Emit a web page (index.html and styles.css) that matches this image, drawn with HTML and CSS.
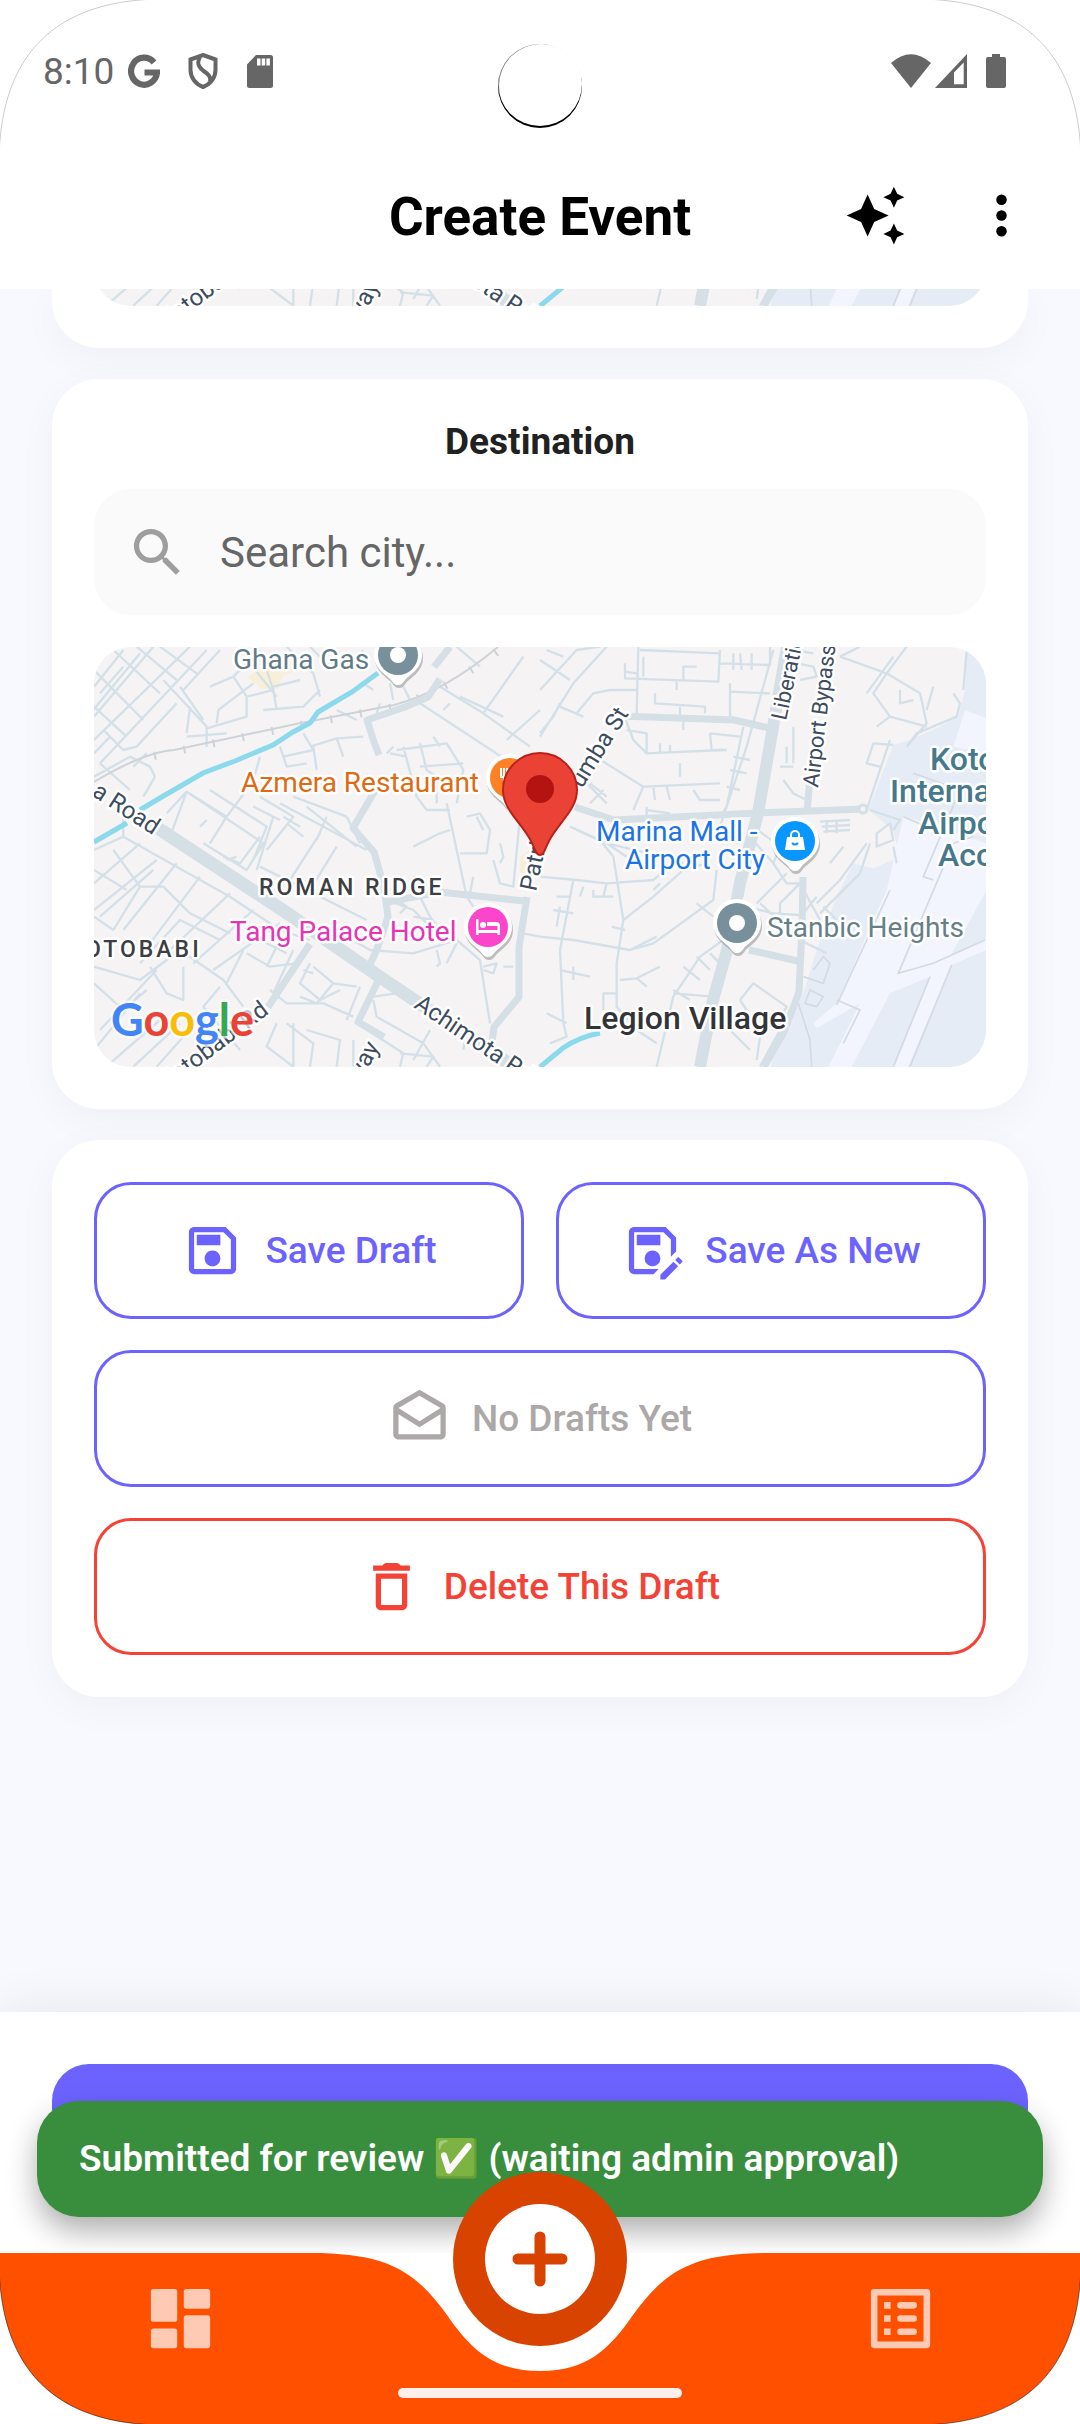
FILE: index.html
```html
<!DOCTYPE html>
<html lang="en">
<head>
<meta charset="utf-8">
<meta name="viewport" content="width=device-width, initial-scale=1">
<title>Create Event</title>
<link rel="stylesheet" href="styles.css">
</head>
<body>
<div class="screen">
  <header class="top">
    <div class="status">
      <span class="status-time">8:10</span>
      <svg class="status-g" viewBox="0 0 32 34" aria-hidden="true"><path d="M26 8.500A13 13.500 0 1 0 29 18.500H16.500" fill="none" stroke="#666" stroke-width="6.200"/></svg>
      <svg class="status-shield" viewBox="0 0 30 36" aria-hidden="true"><path d="M15 2 27.500 6.500V17C27.500 25 22 31.500 15 34 8 31.500 2.500 25 2.500 17V6.500ZM12 4C9 9 9.500 13 15 17.500 21 21.500 23 24 22 28.500" fill="none" stroke="#666" stroke-width="4"/></svg>
      <svg class="status-sd" viewBox="0 0 26 33" aria-hidden="true"><path fill="#666" fill-rule="evenodd" d="M9 0H23.500Q26 0 26 2.500V30.500Q26 33 23.500 33H2.500Q0 33 0 30.500V9.500ZM10 3.500V10.500H13.500V3.500ZM14.700 3.500V10.500H18.200V3.500ZM19.400 3.500V10.500H22.900V3.500Z"/></svg>
      <span class="spacer"></span>
      <svg class="status-wifi" viewBox="0 0 40 34" aria-hidden="true"><path fill="#666" d="M0 9Q20-8.500 40 9L20 34Z"/></svg>
      <svg class="status-cell" viewBox="0 0 32 34" aria-hidden="true"><path fill="#666" fill-rule="evenodd" d="M32 0V34H0ZM28.700 8.500 19 18.500V30.300H28.700Z"/></svg>
      <svg class="status-battery" viewBox="0 0 20 34" aria-hidden="true"><path fill="#666" d="M6 0H14V3H18Q20 3 20 5V32Q20 34 18 34H2Q0 34 0 32V5Q0 3 2 3H6Z"/></svg>
    </div>
    <div class="appbar">
      <h1 class="appbar-title">Create Event</h1>
      <div class="appbar-actions">
        <button class="icon-button" type="button" aria-label="Suggestions"><svg class="icon" viewBox="0 0 24 24"><path d="M19 9l1.250-2.750L23 5l-2.750-1.250L19 1l-1.250 2.750L15 5l2.750 1.250L19 9zm-7.500.5L9 4 6.500 9.500 1 12l5.500 2.500L9 20l2.500-5.500L17 12l-5.500-2.500zM19 15l-1.250 2.750L15 19l2.750 1.250L19 23l1.250-2.750L23 19l-2.750-1.250L19 15z"/></svg></button>
        <button class="icon-button" type="button" aria-label="More options"><svg class="icon" viewBox="0 0 24 24"><circle cx="12" cy="6" r="2"/><circle cx="12" cy="12" r="2"/><circle cx="12" cy="18" r="2"/></svg></button>
      </div>
    </div>
  </header>

  <main class="content">
    <section class="card card-cut" aria-label="Origin">
      <div class="map-window">
        <svg class="map" viewBox="0 0 892 420" preserveAspectRatio="xMidYMid slice" aria-hidden="true">
          <use href="#streets"/>
          <g class="road-name">
            <text transform="translate(72 444) rotate(-37)">Kotobabi</text>
            <text transform="translate(266 437) rotate(-62)">way</text>
            <text transform="translate(319 360) rotate(34)">Achimota Rd</text>
          </g>
        </svg>
      </div>
    </section>

    <section class="card">
      <h2 class="card-title">Destination</h2>
      <label class="search">
        <svg class="icon" viewBox="0 0 24 24" aria-hidden="true"><path d="M15.500 14h-.79l-.28-.27A6.471 6.471 0 0 0 16 9.500 6.500 6.500 0 1 0 9.500 16c1.610 0 3.090-.59 4.230-1.570l.27.280v.79l5 4.990L20.490 19l-4.990-5zm-6 0C7.010 14 5 11.990 5 9.500S7.010 5 9.500 5 14 7.010 14 9.500 11.990 14 9.500 14z"/></svg>
        <input class="search-input" type="text" placeholder="Search city..." aria-label="Search city">
      </label>
      <svg class="map" viewBox="0 0 892 420" preserveAspectRatio="xMidYMid slice" role="img" aria-label="Map of the destination">
        <defs>
          <g id="pin">
            <path d="M0 30C-3 30-5 28-7 25-11 20-24 14-24 0A24 24 0 0 1 24 0C24 14 11 20 7 25 5 28 3 30 0 30Z" fill="#888" opacity=".5" transform="translate(1 3)"/>
            <path d="M0 30C-3 30-5 28-7 25-11 20-24 14-24 0A24 24 0 0 1 24 0C24 14 11 20 7 25 5 28 3 30 0 30Z" fill="#fff"/>
          </g>
        </defs>
        <g id="streets">
          <rect width="892" height="420" fill="#f5f3f4"/>
          <path fill="#f8efd9" d="M154 30 166 22 184 20 190 8 204 8 200 24 188 30 184 42 168 42ZM426 210 434 204 448 212 446 226 426 226Z"/>
          <g transform="translate(446 -17) scale(.33333)">
            <path fill="#e5ecf6" d="M1280 50 1340 50V1320H690L720 1200 790 1090 830 960 890 800 940 700 1000 715 1080 680 1060 600 985 540 1060 345 1110 330 1190 295 1255 260 1275 180Z"/>
            <path fill="#f2f4fe" d="M1275 240 1340 265V370L1240 350ZM1090 560 1150 575 1340 640V780L1230 980 1340 925V960L1235 1005 1100 1320H1060L1170 1040 1050 1090 930 1320H860L960 1120 830 1195 820 1180 900 1110 960 960 1040 780Z"/>
            <path fill="none" stroke="#d3dae3" stroke-width="5" d="M1120 430 1260 480 1150 740 1180 750M1090 560 1160 590M890 1110 960 1140 910 1240M1050 780 890 1125M1335 930 1180 1000 1075 1030 1240 640 1300 620M1170 1040 1060 1310M1235 1005 1110 1310M790 1040 850 1060 870 1000 850 980 820 1020M795 1120 830 1130 850 1100 810 1080ZM775 1120 810 1230 815 1310"/>
          </g>
          <g fill="none" stroke="#d4e0e8" stroke-width="7" stroke-linejoin="round">
            <g transform="translate(-14 -17) scale(.33333)">
              <path d="M42 170 130 60M42 260 220 50M42 330 330 50M60 400 380 60M100 60 240 190M42 120 190 270M170 50 290 150M240 50 350 130M42 230 140 320M130 110 60 190M70 300 130 360 170 350 290 220M180 70 40 240M330 230 320 310M42 370 90 320M250 150 380 290 380 350M420 60 310 180M300 170 370 270M390 170 460 140 540 60M460 140 500 200 500 260 380 295M410 280 415 240 520 160M500 200 580 180 560 120M550 240 670 230 720 180M580 180 590 240M620 50 700 130 720 200M580 170 660 150M510 100 590 200M690 50 760 120"/>
              <path d="M42 440 150 380 210 410 225 440 190 500M60 400 150 480M160 410 200 370M320 320 440 310M540 380 520 450M600 350 620 410 680 400M670 310 700 360 610 380M690 350 770 325 850 320M770 325 790 380M700 350 710 420M1020 220 1340 430M1080 170 1210 250 1350 350M1210 250 1330 80M1140 200 1270 260M1280 330 1380 240M1090 240 1110 220M1130 50 1200 110"/>
              <path d="M260 550 320 485 550 640 500 720 370 640M320 485 270 620M320 485 440 560 390 640M440 560 500 480M390 480 560 590 520 690M430 680 480 700 540 620M540 500 640 560 560 660M520 530 600 570M600 520 860 660M640 500 800 560M720 610 630 750M770 650 690 780M680 530 830 650M540 710 860 870M580 560 530 720M610 560 660 590M620 580 670 620M360 590 380 570M440 690 470 680M740 560 710 630M800 560 840 640"/>
              <path d="M42 660 130 620 450 800 600 900 690 930M130 620 130 560M42 760 180 640M42 840 230 690M100 660 180 770 250 770 330 850 450 910M60 860 220 720M130 900 290 700M210 940 360 740M270 960 450 790M340 1000 520 840M400 1020 600 880M180 770 100 900M42 720 140 780M42 860 100 900M180 1000 300 870 420 930M42 1010 180 1050 300 960 430 1050 490 1130M42 1060 130 1140 200 1080M60 1200 230 1020M42 1260 180 1090M90 1300 240 1170M160 1310 300 1180M230 1310 310 1220M210 1010 260 1090 310 1110 310 1010M420 1070 370 1130 480 1260M500 970 570 1010 650 1000M540 930 620 970M490 960 440 1060M600 930 560 1010M640 960 580 1090"/>
              <path d="M690 1000 660 1060 720 1110 780 1080M700 1010 760 1060 830 1070M760 1060 710 1120 660 1100M670 1020 700 1030M570 1080 620 1120 730 1120 820 1160M640 1180 640 1310M590 1180 560 1250 640 1310M620 1180 700 1240 690 1310M680 1200 780 1230 770 1310M830 1180 970 1270 960 1310M820 1230 820 1310M880 1100 950 1090 1040 1150 1160 1190 1150 1260M880 1110 890 1160 1030 1240 1080 1310M840 1070 800 1170M960 1270 1060 1280 1040 1310M1050 1200 1000 1290"/>
              <path d="M800 920 870 960 1000 970 1130 930 1200 990 1230 1180M1070 960 1080 1000 1070 1010M1130 940 1100 1000M920 810 1000 840 1060 900M950 810 980 830 960 850M1000 760 1050 860 1080 900M1100 520 1160 800 1180 830M950 360 1100 340 1150 420 1130 520M970 350 1010 500 1040 540 1110 540M930 370 980 380M1020 340 1040 420 1070 440 1070 520M1020 410 1150 400M940 350 920 370M1060 320 1080 350M1160 560 1200 550 1230 600 1220 670 1140 670M1000 650 1080 610 1110 600M1180 740 1170 790M1190 560 1210 600M1260 700 1270 680 1260 640M1240 690 1260 760 1300 770 1320 560M1330 910 1380 920M1060 870 1000 860"/>
              <path d="M1210 1010 1250 1000 1240 1030 1210 1020M1270 1010 1300 1010M850 60 830 90M880 180 850 160M900 220 890 250M930 160 940 210M770 240 830 270M970 170 990 210"/>
            </g>
            <g transform="translate(446 -17) scale(.33333)">
              <path d="M0 180 110 60 180 50M0 320 100 160 200 50M0 90 90 150M20 60 70 80M60 230 130 260M60 220 40 260 0 310M110 250 160 190 210 180 290 180M295 50 290 250M300 60 540 70M255 100 255 145 535 155 540 60M255 125 290 130M310 80 310 140M430 150 430 110 470 110M410 150 410 180M540 100 690 105 690 50M580 70 580 120M600 70 605 120M635 70 635 120M570 185 690 190M570 160 570 260 600 270M345 190 345 220 495 230 495 250M420 230 420 260M700 60 620 350 530 620 600 640M610 290 560 530 540 560M510 310 600 320M510 310 515 360 560 360M430 300 430 270"/>
              <path d="M250 250 280 330 320 370 550 360M150 370 310 470 540 460M320 370 320 310 260 300M310 470 280 540M360 370 360 340M390 370 390 345M380 470 390 510M460 480 480 510 540 510M420 400 420 440M110 430 200 520M150 460 200 500M190 480 150 520M580 380 630 390M570 420 620 430M560 470 600 480M340 470 345 510M320 540 390 550M320 530 320 560"/>
              <path d="M0 740 110 750 200 760 340 750 400 700 430 680M90 590 180 630 220 680 250 870 230 1000 230 1130 290 1200 350 1240M110 600 200 640 370 680 430 700M200 640 260 680M340 680 340 720M100 750 60 960 70 1180 80 1220 30 1240M0 920 100 930 270 960 340 940 520 810 530 720M250 870 340 800 430 720 500 700M270 960 350 920M50 800 90 800M40 840 100 850M60 830 50 890M130 770 120 800M160 780 160 800 220 800M200 760 190 800M215 890 255 900M340 780 360 760M470 820 520 860M240 1050 290 1045 360 1010M290 1045 320 1070M400 1080 450 1110M60 1020 150 1040M100 1010 100 1050M20 1150 80 1180M190 1140 190 1090 230 1090M350 1310 400 1100 480 980 550 930M430 1010 480 1050M470 980 510 1020M400 1090 520 1100M510 970 540 1000"/>
              <path d="M630 620 700 700 740 760 780 760M640 590 720 650 700 700M650 820 740 730M620 830 700 850 780 855M720 850 720 820 780 760M660 820 780 930 860 970M780 760 840 870M600 1110 640 1060 740 1130 700 1200M600 1110 640 1170M570 1200 630 1260M610 1190 660 1220 650 1290M720 1200 660 1310M830 820 900 750 980 640M850 830 890 870M830 800 790 850"/>
              <path d="M900 80 1040 130 1140 190 1160 280 1100 350M900 80 960 50M1100 50 1040 130M980 190 1060 80M1040 130 1000 190 1050 260 1010 290M1050 260 1160 290M1080 180 1080 220 1120 210M1180 170 1160 240M1240 190 1260 220 1250 260 1130 310 1100 350M1280 60 1270 180M1060 345 1000 340 980 400 1020 410M1050 330 980 540M730 450 760 490 800 510M760 290 760 400M720 410 760 410M740 350 740 400M770 100 820 110 830 140 780 150M760 60 820 70M990 540 1080 570 1060 600M1010 610 1050 580 1060 630 1010 650ZM1060 650 1070 700M990 640 960 730 840 850"/>
              <path d="M840 575 930 570M845 590 930 585M850 605 930 600M860 570 860 610M890 570 890 610M910 650 870 700"/>
            </g>
          </g>
          <g fill="none" stroke="#ced3d8" stroke-width="2">
            <path d="M0 135Q50 105 80 103L202 77 300 58Q350 45 404 0"/>
            <path stroke-dasharray="2 28" stroke-width="8" d="M60 109 202 79 300 60Q350 45 404 4"/>
          </g>
          <path fill="none" stroke="#8bd9ec" stroke-width="5" d="M0 195 33 176M46 163 66 151 109 126 141 114 179 98 199 85 216 76 224 65 258 45 284 26M446 420 469 401Q485 390 506 386"/>
          <g fill="none" stroke="#d5dfe6" stroke-linejoin="round">
            <path stroke-width="13" d="M56 176 193 266 286 330 420 420"/>
            <path stroke-width="12" d="M693 0 679 80 664 166 646 236 633 303 619 353 606 420"/>
            <path stroke-width="7" d="M340 20 356 0M346 32 334 50 311 60 273 73 280 95 285 108M285 137 259 181 280 205 290 240 294 270 283 302 275 320M294 255 345 245 430 254M433 250 425 300 425 350 400 380 396 410M481 160 520 173 664 166 770 162M526 69 640 73 684 83M709 230 708 280 705 345 690 385 670 420M655 303 708 315M286 330 264 375 290 390M174 360 216 297M716 130 713 166"/>
          </g>
          <circle cx="769" cy="162" r="4" fill="#f5f3f4" stroke="#d5dfe6" stroke-width="3"/>
        </g>
        <g class="road-name">
          <text transform="translate(-3 148) rotate(33)">a Road</text>
          <text transform="translate(442 245) rotate(-78)">Patri</text>
          <text transform="translate(488 142) rotate(-58)">umba St</text>
          <text class="road-small" transform="translate(692 74) rotate(-78)">Liberatio</text>
          <text class="road-small" transform="translate(724 141) rotate(-83)">Airport Bypass</text>
          <text transform="translate(72 444) rotate(-37)">Kotobabi Rd</text>
          <text transform="translate(266 437) rotate(-62)">way</text>
          <text transform="translate(319 360) rotate(34)">Achimota Rd</text>
        </g>
        <g class="poi">
          <text x="139" y="22" fill="#5f7c88">Ghana Gas</text>
          <text x="147" y="145" fill="#df6a11">Azmera Restaurant</text>
          <text x="136" y="294" fill="#e733b5">Tang Palace Hotel</text>
          <text x="502" y="194" fill="#1a73e8">Marina Mall -</text>
          <text x="531" y="222" fill="#1a73e8">Airport City</text>
          <text x="673" y="290" fill="#668089">Stanbic Heights</text>
        </g>
        <g class="district">
          <text x="165" y="248">ROMAN RIDGE</text>
          <text x="-9" y="310">OTOBABI</text>
        </g>
        <g class="place">
          <text x="490" y="382">Legion Village</text>
          <g fill="#46798a">
            <text x="836" y="123">Koto</text>
            <text x="796" y="155">Interna</text>
            <text x="824" y="187">Airpo</text>
            <text x="844" y="219">Acc</text>
          </g>
        </g>
        <g transform="translate(304 8)"><use href="#pin"/><circle r="20" fill="#78909c"/><circle r="8" fill="#fff"/></g>
        <g transform="translate(416 131)"><use href="#pin"/><circle r="20" fill="#ff8126"/><path d="M-9-10V-1H-3V-10M-6-10V10" fill="none" stroke="#fff" stroke-width="2"/></g>
        <g transform="translate(394 280)"><use href="#pin"/><circle r="20" fill="#fb45cb"/><path fill="#fff" d="M-12-8H-9.500V3H9.500V-1H-1V-5H8Q12-5 12-1V8H9.500V6H-9.500V8H-12Z"/><circle cx="-5" cy="-2" r="3" fill="#fff"/></g>
        <g transform="translate(701 194)"><use href="#pin"/><circle r="20" fill="#0a96ff"/><path fill="#fff" d="M-8-4H8L10 9H-10Z"/><path d="M-4-3V-6A4 4 0 0 1 4-6V-3" fill="none" stroke="#fff" stroke-width="2"/><path d="M-3 2Q0 5 3 2" fill="none" stroke="#0a96ff" stroke-width="2"/></g>
        <g transform="translate(643 276)"><use href="#pin"/><circle r="20" fill="#78909c"/><circle r="8" fill="#fff"/></g>
        <path d="M446 106A37 37 0 0 1 483 143C483 163 464 176 455 194 450 204 450 208 446 208S442 204 437 194C428 176 409 163 409 143A37 37 0 0 1 446 106Z" fill="#ea4335" stroke="#b9211b" stroke-width="2"/>
        <circle cx="446" cy="142" r="14" fill="#b31412"/>
        <text class="brand" x="17" y="389"><tspan fill="#4285f4">G</tspan><tspan fill="#ea4335">o</tspan><tspan fill="#fbbc04">o</tspan><tspan fill="#4285f4">g</tspan><tspan fill="#34a853">l</tspan><tspan fill="#ea4335">e</tspan></text>
      </svg>
    </section>

    <section class="card drafts" aria-label="Drafts">
      <div class="draft-row">
        <button class="outline" type="button"><svg class="icon" viewBox="0 0 24 24" aria-hidden="true"><path d="M17 3H5c-1.110 0-2 .9-2 2v14c0 1.100.89 2 2 2h14c1.100 0 2-.9 2-2V7l-4-4zm2 16H5V5h11.170L19 7.830V19zm-7-7c-1.660 0-3 1.340-3 3s1.340 3 3 3 3-1.340 3-3-1.340-3-3-3zM6 6h9v4H6V6z"/></svg>Save Draft</button>
        <button class="outline" type="button"><svg class="icon" viewBox="0 0 24 24" aria-hidden="true"><path d="M21 12.400V7l-4-4H5c-1.110 0-2 .9-2 2v14c0 1.100.89 2 2 2h7.400l2-2H5V5h11.170L19 7.830v6.570l2-2z"/><circle cx="12" cy="15" r="3"/><path d="M6 6h9v4H6V6zm13.990 10.250l1.770 1.770L16.770 23H15v-1.770l4.990-4.980zm3.260.26l-.85.85-1.770-1.770.85-.85c.2-.2.51-.2.710 0l1.060 1.060c.2.2.2.51 0 .71z"/></svg>Save As New</button>
      </div>
      <button class="outline" type="button" disabled><svg class="icon" viewBox="0 0 24 24" aria-hidden="true"><path d="M21.990 8c0-.72-.37-1.350-.94-1.700L12 1 2.950 6.300C2.380 6.650 2 7.280 2 8v10c0 1.100.9 2 2 2h16c1.100 0 2-.9 2-2l-.01-10zM20 8v.01L12 13 4 8l8-4.680L20 8zM4 18v-7.660l8 5.020 7.990-4.990L20 18H4z"/></svg>No Drafts Yet</button>
      <button class="outline outline-danger" type="button"><svg class="icon" viewBox="0 0 24 24" aria-hidden="true"><path d="M6 19c0 1.100.9 2 2 2h8c1.100 0 2-.9 2-2V7H6v12zM8 9h8v10H8V9zm7.500-5-.7-.7Q14.500 3 14 3h-4Q9.500 3 9.200 3.300L8.500 4H5v2h14V4h-3.500z"/></svg>Delete This Draft</button>
    </section>
  </main>

  <div class="actions">
    <button class="submit" type="button" aria-label="Submit"></button>
    <div class="toast" role="status">Submitted for review ✅ (waiting admin approval)</div>
  </div>

  <nav class="nav">
    <svg class="nav-shape" viewBox="0 0 1080 171" preserveAspectRatio="none" aria-hidden="true"><path fill="#ff5000" d="M0 0H310C388 0 415 18 447 62 470 95 492 118 540 118S610 95 633 62C665 18 692 0 770 0H1080V171H0Z"/></svg>
    <a class="nav-item" href="#dashboard" aria-label="Dashboard"><svg class="nav-icon" viewBox="0 0 24 24"><rect x="3" y="3" width="8" height="10" rx=".8"/><rect x="3" y="15" width="8" height="6" rx=".8"/><rect x="13" y="3" width="8" height="6" rx=".8"/><rect x="13" y="11" width="8" height="10" rx=".8"/></svg></a>
    <span class="nav-gap"></span>
    <a class="nav-item" href="#events" aria-label="Events"><svg class="nav-icon" viewBox="0 0 24 24"><path fill-rule="evenodd" d="M4 3H20Q21 3 21 4V20Q21 21 20 21H4Q3 21 3 20V4Q3 3 4 3ZM5 5V19H19V5ZM7 7H9V9H7ZM7 11H9V13H7ZM7 15H9V17H7Z"/><rect x="11" y="7" width="6" height="2" rx="1"/><rect x="11" y="11" width="6" height="2" rx="1"/><rect x="11" y="15" width="6" height="2" rx="1"/></svg></a>
    <button class="fab" type="button" aria-label="Create"><svg class="fab-icon" viewBox="0 0 110 110"><circle cx="55" cy="55" r="55" fill="#fff"/><path d="M55 33V77M33 55H77" stroke="#d94300" stroke-width="11" stroke-linecap="round"/></svg></button>
    <span class="home-bar"></span>
  </nav>

  <span class="camera"></span>
  <svg class="corner corner-tl" viewBox="0 0 165 165" aria-hidden="true"><path d="M0 0V165C0 56 56 0 165 0Z"/></svg>
  <svg class="corner corner-tr" viewBox="0 0 165 165" aria-hidden="true"><path d="M0 0V165C0 56 56 0 165 0Z"/></svg>
  <svg class="corner corner-bl" viewBox="0 0 165 165" aria-hidden="true"><path d="M0 0V165C0 56 56 0 165 0Z"/></svg>
  <svg class="corner corner-br" viewBox="0 0 165 165" aria-hidden="true"><path d="M0 0V165C0 56 56 0 165 0Z"/></svg>
</div>
</body>
</html>
```
FILE: styles.css
```css
* { box-sizing: border-box; }

body {
  margin: 0;
  font-family: Roboto, "Liberation Sans", sans-serif;
  color: #212121;
  background: #f8f9fe;
}

button {
  font: inherit;
  margin: 0;
  padding: 0;
  border: 0;
  background: none;
}

.screen {
  position: relative;
  display: flex;
  flex-direction: column;
  min-height: 100vh;
  overflow: hidden;
}

.icon {
  display: block;
  flex: none;
  width: 63px;
  height: 63px;
  fill: currentColor;
}

/* Status bar and app bar */
.top {
  position: relative;
  z-index: 1;
  background: #fff;
}

.status {
  display: flex;
  align-items: center;
  height: 142px;
  padding: 0 74px 0 43px;
}

.status-time {
  width: 85px;
  font-size: 37px;
  color: #666;
}

.status-g { width: 32px; height: 34px; margin-right: 28px; }
.status-shield { width: 30px; height: 36px; margin-right: 29px; }
.status-sd { width: 26px; height: 33px; }
.spacer { flex: 1; }
.status-wifi { width: 40px; height: 34px; margin-right: 4px; }
.status-cell { width: 32px; height: 34px; margin-right: 19px; }
.status-battery { width: 20px; height: 34px; }

.appbar {
  display: grid;
  grid-template-columns: 1fr auto 1fr;
  align-items: center;
  height: 147px;
  padding-right: 16px;
  padding-left: 16px;
  color: #000;
}

.appbar-title {
  grid-column: 2;
  margin: 0;
  padding-top: 2px;
  font-size: 53px;
  line-height: 62px;
  font-weight: 700;
}

.appbar-actions {
  display: flex;
  justify-content: flex-end;
}

.icon-button {
  display: flex;
  align-items: center;
  justify-content: center;
  width: 126px;
  height: 126px;
}

/* Cards */
.content {
  display: flex;
  flex: 1;
  flex-direction: column;
  gap: 31px;
  padding: 0 52px 100px;
}

.card {
  padding: 42px;
  border-radius: 47px;
  background: #fff;
  box-shadow: 0 10px 42px rgba(0, 0, 0, .04);
}

.card-cut {
  padding-top: 0;
  border-top-left-radius: 0;
  border-top-right-radius: 0;
}

.card-title {
  margin: 0 0 26px;
  font-size: 37px;
  line-height: 42px;
  font-weight: 700;
  text-align: center;
}

.search {
  display: flex;
  align-items: center;
  gap: 31px;
  height: 126px;
  margin-bottom: 32px;
  padding: 0 32px;
  border-radius: 37px;
  background: #fafafa;
  color: #9e9e9e;
}

.search-input {
  flex: 1;
  min-width: 0;
  padding: 0;
  border: 0;
  background: none;
  color: #212121;
  font: inherit;
  font-size: 42px;
}

.search-input::placeholder {
  color: #666;
  opacity: 1;
}

.map {
  display: block;
  flex: none;
  width: 100%;
  height: 420px;
  border-radius: 37px;
}

/* The first card is scrolled: only the foot of its map shows. */
.map-window {
  display: flex;
  align-items: flex-end;
  height: 17px;
  overflow: hidden;
}

.map text {
  stroke: #fff;
  stroke-width: 5px;
  stroke-linejoin: round;
  paint-order: stroke;
}

.road-name { font-size: 24px; fill: #3d4c5e; }
.road-small { font-size: 22px; }
.poi { font-size: 28px; }
.district { font-size: 23px; font-weight: 500; letter-spacing: 3px; fill: #3c4043; }
.place { font-size: 32px; font-weight: 500; fill: #333438; }
.map .brand { font-family: Lato, sans-serif; font-size: 45px; font-weight: 700; stroke-opacity: .7; }

/* Draft buttons */
.drafts {
  display: flex;
  flex-direction: column;
  gap: 31px;
}

.draft-row {
  display: grid;
  grid-template-columns: 1fr 1fr;
  gap: 32px;
}

.outline {
  display: flex;
  align-items: center;
  justify-content: center;
  gap: 21px;
  height: 137px;
  border: 3px solid #6c63ff;
  border-radius: 37px;
  color: #6c63ff;
  font-size: 37px;
  font-weight: 500;
}

.outline:disabled { color: #aca8a8; }

.outline-danger {
  border-color: #f44336;
  color: #f44336;
}

/* Submit bar */
.actions {
  position: relative;
  height: 241px;
  padding: 52px;
  background: #fff;
  box-shadow: 0 -10px 42px rgba(0, 0, 0, .06);
}

.submit {
  display: block;
  width: 100%;
  height: 137px;
  border-radius: 37px;
  background: #6c63ff;
}

.toast {
  position: absolute;
  right: 37px;
  bottom: 36px;
  left: 37px;
  padding: 37px 42px;
  border-radius: 42px;
  background: #388e3c;
  box-shadow: 0 14px 30px rgba(0, 0, 0, .32);
  color: #fff;
  font-size: 37px;
  line-height: 42px;
  font-weight: 600;
}

/* Bottom navigation */
.nav {
  position: relative;
  display: flex;
  height: 171px;
  background: #fff;
}

.nav-shape {
  position: absolute;
  width: 100%;
  height: 100%;
}

.nav-item {
  position: relative;
  display: flex;
  flex: 1;
  justify-content: center;
  padding-top: 26px;
  color: #ffcab3;
}

.nav-gap { flex: 1; }

.nav-icon {
  width: 79px;
  height: 79px;
  fill: currentColor;
}

.fab {
  position: absolute;
  top: -81px;
  left: calc(50% - 87px);
  display: flex;
  align-items: center;
  justify-content: center;
  width: 174px;
  height: 174px;
  border-radius: 50%;
  background: #d94300;
}

.fab-icon {
  width: 110px;
  height: 110px;
}

.home-bar {
  position: absolute;
  bottom: 26px;
  left: calc(50% - 142px);
  width: 284px;
  height: 10px;
  border-radius: 5px;
  background: #fff0eb;
}

/* Display cut-outs */
.camera {
  position: absolute;
  z-index: 2;
  top: 44px;
  left: calc(50% - 42px);
  width: 84px;
  height: 84px;
  border-radius: 50%;
  box-shadow: inset 0 -2px 0 #000, inset 1px 0 0 rgba(0, 0, 0, .5);
}

.corner {
  position: absolute;
  z-index: 2;
  width: 165px;
  height: 165px;
  fill: #fff;
  stroke: #000;
  stroke-width: 1;
  stroke-opacity: .2;
}

.corner-tl { top: -1px; left: -1px; }
.corner-tr { top: -1px; right: -1px; transform: scaleX(-1); }
.corner-bl { bottom: -1px; left: -1px; transform: scaleY(-1); stroke-opacity: .5; }
.corner-br { right: -1px; bottom: -1px; transform: scale(-1); stroke-opacity: .5; }
```
